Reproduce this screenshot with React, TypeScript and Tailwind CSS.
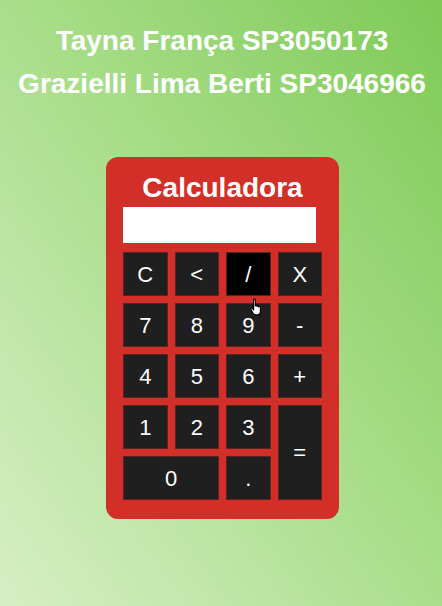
const keys: { label: string; span?: string; active?: boolean }[] = [
  { label: "C" },
  { label: "<" },
  { label: "/", active: true },
  { label: "X" },
  { label: "7" },
  { label: "8" },
  { label: "9" },
  { label: "-" },
  { label: "4" },
  { label: "5" },
  { label: "6" },
  { label: "+" },
  { label: "1" },
  { label: "2" },
  { label: "3" },
  { label: "=", span: "row-span-2" },
  { label: "0", span: "col-span-2" },
  { label: "." },
];

function HandCursor() {
  return (
    <svg
      width="16"
      height="18"
      viewBox="0 0 14 16"
      className="absolute left-[249px] top-[298px]"
    >
      <path
        d="M4 1.5c0-.8 1.5-.8 1.5 0V7c0-.8 1.5-.8 1.5 0v.5c0-.8 1.5-.8 1.5 0v.5c0-.8 1.5-.8 1.5 0V12c0 1.5-1 3-3 3H6c-1.2 0-2-.6-2.6-1.6L1.5 10c-.4-.8.6-1.4 1.2-.8L4 10.5Z"
        fill="#fff"
        stroke="#000"
        strokeWidth="1"
        strokeLinejoin="round"
      />
    </svg>
  );
}

export default function App() {
  return (
    <div className="relative w-[442px] h-[606px] overflow-hidden bg-[linear-gradient(to_top_right,#d6efc5,#a6dc86_55%,#7dca56)] font-['Liberation_Sans',Arial,sans-serif]">
      <div className="pt-[19px] pl-[2px] text-center text-white font-bold text-[28px] leading-[43px]">
        <h2>Tayna França SP3050173</h2>
        <h2>Grazielli Lima Berti SP3046966</h2>
      </div>

      <div className="mt-[52px] ml-[106px] w-[233px] h-[362px] rounded-xl bg-[#d22f28] px-[17px] pt-[15px]">
        <h1 className="text-center text-white font-bold text-[28px] leading-[32px]">
          Calculadora
        </h1>
        <div className="mt-[3px] w-[193px] h-[36px] bg-white" />
        <div className="mt-[9px] w-[199px] grid grid-cols-4 auto-rows-[44px] gap-x-[7px] gap-y-[7px]">
          {keys.map((k) => (
            <button
              key={k.label}
              className={`${k.span ?? ""} ${
                k.active ? "bg-black" : "bg-[#1f1f1f]"
              } border border-[#5a2422] flex items-center justify-center text-white text-[22px] font-normal`}
            >
              {k.label}
            </button>
          ))}
        </div>
      </div>

      <HandCursor />
    </div>
  );
}
